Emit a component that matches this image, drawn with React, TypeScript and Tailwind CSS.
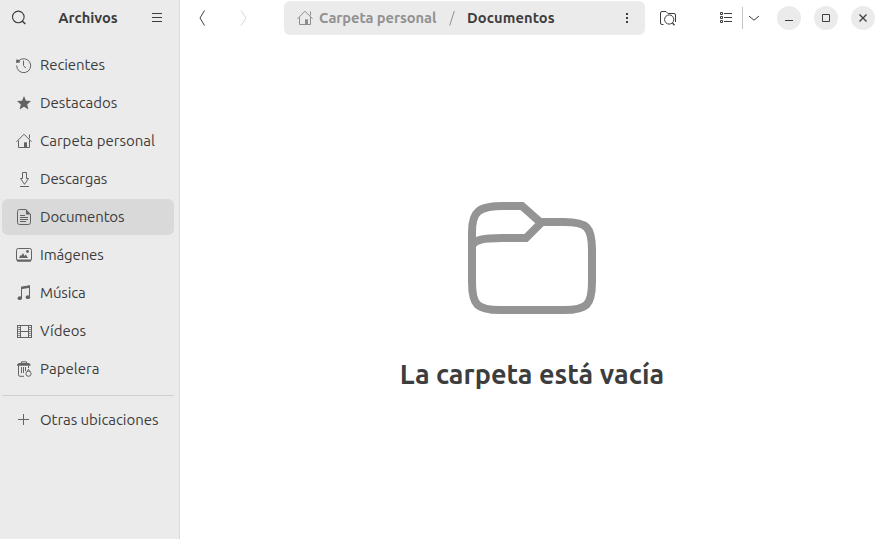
import type { ReactNode } from "react";

function Icon({ children, className = "" }: { children: ReactNode; className?: string }) {
  return (
    <svg viewBox="0 0 16 16" className={`h-4 w-4 shrink-0 ${className}`} fill="none" stroke="currentColor" strokeWidth="1">
      {children}
    </svg>
  );
}

const House = ({ className = "" }: { className?: string }) => (
  <Icon className={className}>
    <path d="M.5 8.800 8 1.200l7.500 7.600M2.500 7.500v7h5.500M13.500 7v7.500H11M13.500 1.500v4" />
    <path d="M8 9.300h3V15H8z" fill="currentColor" stroke="none" />
  </Icon>
);

const Clock = () => (
  <Icon>
    <path d="M2.700 3.800A7 7 0 1 1 .7 8.500" />
    <path d="M7.500 3.700v4.800l2.300 2.700" />
    <path d="M.2 2.500 3.800 3v2.600L.2 6z" fill="currentColor" stroke="none" />
  </Icon>
);

const Star = () => (
  <Icon>
    <path d="m8 1 2 4.700 5 .4-3.800 3.300 1.200 5L8 11.700l-4.400 2.700 1.200-5L1 6.100l5-.4z" fill="currentColor" stroke="none" />
  </Icon>
);

const Download = () => (
  <Icon>
    <path d="M6.500 1.500h4v6h2L8.500 13.300 4.500 7.500h2zM4 15.500h9" />
  </Icon>
);

const Document = () => (
  <Icon>
    <path d="M10 .500H3.500Q1.500 .500 1.500 2.500v11q0 2 2 2h9q2 0 2-2V5M4 6.500h5M4 8.500h8M4 10.500h8M4 12.500h6" />
    <path d="M10 0 15 5.500h-5z" fill="currentColor" stroke="none" />
  </Icon>
);

const Picture = () => (
  <Icon>
    <rect x=".5" y="1.500" width="15" height="12.500" rx="1.800" />
    <path d="M1 13.500h14" strokeWidth="2" />
    <path d="m3 11 1.500-3 .8.800L7 6l1.500 3 1.300-1.500L12 11z" fill="currentColor" stroke="none" />
    <circle cx="11.500" cy="4.500" r="1.400" fill="currentColor" stroke="none" />
  </Icon>
);

const Music = () => (
  <Icon>
    <path d="M5.500 13V2.500L13.500 1v10.500" />
    <path d="M5 1.800 14 .2v2.600L5 4.300z" fill="currentColor" stroke="none" />
    <ellipse cx="3.800" cy="13.200" rx="2.200" ry="1.900" fill="currentColor" stroke="none" />
    <ellipse cx="11.900" cy="12.200" rx="2.200" ry="1.900" fill="currentColor" stroke="none" />
  </Icon>
);

const Film = () => (
  <Icon>
    <path d="M1 2.500h15M1 14.500h15M4.500 2v13M12.500 2v13M4.500 8.500h8" />
    <path d="M1.500 2v13M15.500 2v13" />
    <path d="M3 4v10M14 4v10" strokeWidth="2" strokeDasharray="1 1" strokeOpacity=".7" />
  </Icon>
);

const Trash = () => (
  <Icon>
    <path d="M5.500 2.300V.8h5v1.500" />
    <path d="M1 3.500 3 2h10l1.500 1.500v1.300H1z" fill="currentColor" stroke="none" />
    <path d="M2.500 4v9.800q0 1.500 1.500 1.500h4M12.500 5v2M5.500 6v6M7.500 6v6M9.500 6v4" />
    <circle cx="12.500" cy="12.700" r="2.600" />
    <path d="m11.300 10.500 1.200-2.300 1.200 2.300" />
  </Icon>
);

const Plus = () => (
  <Icon>
    <path d="M7.500 2v11M2 7.500h11" />
  </Icon>
);

const places = [
  { label: "Recientes", icon: <Clock />, track: "tracking-[-0.1px]" },
  { label: "Destacados", icon: <Star />, track: "tracking-[-0.05px]" },
  { label: "Carpeta personal", icon: <House />, track: "tracking-normal" },
  { label: "Descargas", icon: <Download />, track: "tracking-[-0.15px]" },
  { label: "Documentos", icon: <Document />, track: "tracking-[-0.15px]" },
  { label: "Imágenes", icon: <Picture />, track: "tracking-[-0.15px]" },
  { label: "Música", icon: <Music />, track: "tracking-[-0.15px]" },
  { label: "Vídeos", icon: <Film />, track: "tracking-normal" },
  { label: "Papelera", icon: <Trash />, track: "tracking-[0.05px]" },
];

function Place({ label, icon, track, active }: { label: string; icon: ReactNode; track: string; active?: boolean }) {
  return (
    <div className={`flex h-9 items-center gap-2 rounded-md pl-3.5 ${active ? "bg-[#d9d9d9]" : ""}`}>
      <span className="text-[#636363]">{icon}</span>
      <span className={`whitespace-nowrap text-[15px] leading-5 ${track}`}>{label}</span>
    </div>
  );
}

function WindowButton({ children }: { children: ReactNode }) {
  return (
    <button className="flex h-6 w-6 items-center justify-center rounded-full bg-[#ebebeb]">
      <Icon>{children}</Icon>
    </button>
  );
}

export default function App() {
  return (
    <div className="flex h-[539px] w-[884px] overflow-hidden bg-white font-['Ubuntu','Noto_Sans',sans-serif] text-[#3d3d3d]">
      <aside className="flex w-[180px] shrink-0 flex-col border-r border-[#dadada] bg-[#ebebeb]">
        <header className="flex h-9 items-center justify-between pr-3.5 pl-[11px]">
          <Icon>
            <circle cx="7.300" cy="6.900" r="5.800" strokeWidth="1.100" />
            <path d="m11.300 11 3 3" strokeWidth="1.500" />
          </Icon>
          <h1 className="text-[14.67px] leading-5 font-bold tracking-[0.05px]">Archivos</h1>
          <Icon>
            <path d="M3 3.500h10M3 7.500h10M3 11.500h10" />
          </Icon>
        </header>
        <nav className="mt-[11px] flex flex-col gap-0.5 pr-[5px] pl-0.5">
          {places.map((p) => (
            <Place key={p.label} {...p} active={p.label === "Documentos"} />
          ))}
        </nav>
        <div className="mt-2 mr-[5px] ml-0.5 h-px bg-[#cecece]" />
        <div className="mt-1.5 pl-0.5">
          <Place label="Otras ubicaciones" icon={<Plus />} track="tracking-[-0.05px]" />
        </div>
      </aside>

      <main className="flex min-w-0 flex-1 flex-col">
        <header className="flex h-9 shrink-0 items-center">
          <Icon className="ml-[14px]">
            <path d="m10.500 .5-4.500 7.500 4.500 7.500" />
          </Icon>
          <Icon className="ml-6 text-[#d5d5d5]">
            <path d="m7 .5 5 7.500-5 7.500" />
          </Icon>
          <div className="ml-[34px] flex h-[34px] w-[361px] items-center rounded-md bg-[#ebebeb] pr-2.5 pl-[13px] text-[14.67px] leading-5 font-bold">
            <House className="text-[#8c8c8c]" />
            <span className="ml-1.5 w-[118px] whitespace-nowrap tracking-[-0.05px] text-[#919191]">Carpeta personal</span>
            <svg viewBox="0 0 6 16" className="ml-3 h-4 w-1.5" fill="none" stroke="#919191">
              <path d="M5.300 1 .7 15.500" />
            </svg>
            <span className="ml-3 whitespace-nowrap tracking-[0.1px]">Documentos</span>
            <Icon className="ml-auto">
              <path d="M7 3h2v2H7zM7 7h2v2H7zM7 11h2v2H7z" fill="currentColor" stroke="none" />
            </Icon>
          </div>
          <Icon className="ml-[15px]">
            <path d="M3.500 14.500H2Q.5 14.500.5 13V3q0-1.500 1.500-1.500h4L8 3.500h6q1.500 0 1.500 1.500v7" />
            <circle cx="9.200" cy="9.500" r="4.600" />
            <path d="m12.500 13 2 2.200" strokeWidth="1.300" />
          </Icon>
          <Icon className="ml-[42px]">
            <path d="M2.500 2.500h2v2h-2zM2.500 6.500h2v2h-2zM2.500 10.500h2v2h-2zM6 3.500h8M6 7.500h8M6 11.500h8" />
          </Icon>
          <span className="ml-2 h-[22px] w-px bg-[#c5c5c5]" />
          <Icon className="ml-[3px]">
            <path d="m3 6 5 4.200L13 6" />
          </Icon>
          <div className="ml-[15px] flex gap-[13px]">
            <WindowButton><path d="M4 10.500h8" /></WindowButton>
            <WindowButton><path d="M4.500 4.500h7v7h-7z" /></WindowButton>
            <WindowButton><path d="m4.500 4.500 7 7m0-7-7 7" strokeWidth="1.300" /></WindowButton>
          </div>
        </header>
        <section className="flex flex-col items-center pt-[166px]">
          <svg viewBox="0 0 128 112" className="h-28 w-32" fill="none" stroke="#949494" strokeWidth="8">
            <path d="M72 20 54 4H36C11 4 4 9 4 30V80C4 103 9 108 32 108H96C119 108 124 103 124 80V48C124 25 119 20 96 20H74L58 36H34C14 36 8 38 4 43" />
          </svg>
          <h2 className="mt-11 text-[27px] leading-8 font-bold tracking-[0.04px]">La carpeta está vacía</h2>
        </section>
      </main>
    </div>
  );
}
